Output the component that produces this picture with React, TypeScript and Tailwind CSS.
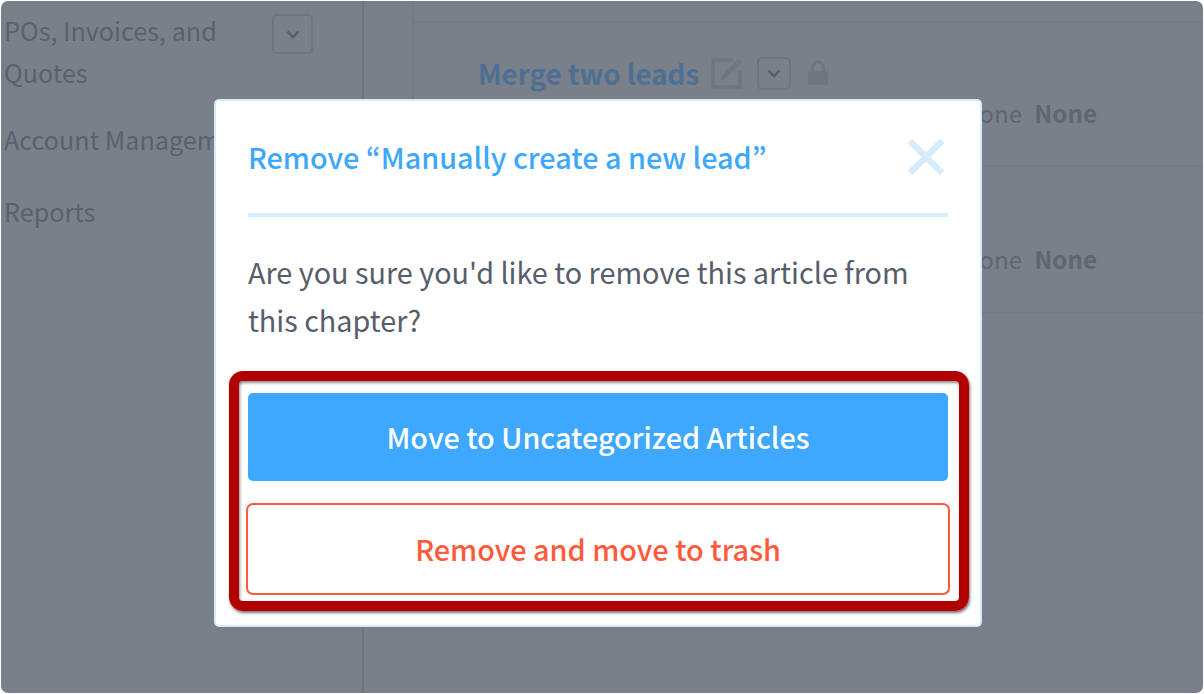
const FONT = '"Noto Sans CJK KR", "Noto Sans", sans-serif';

function ChevronButton({ className }: { className: string }) {
  return (
    <div className={"flex items-center justify-center rounded-[5px] border-2 border-[#6f7580] " + className}>
      <svg width="14" height="9" viewBox="0 0 14 9" fill="none" stroke="#565c68" strokeWidth="2.4">
        <path d="M1.5 1.5 7 7l5.5-5.5" />
      </svg>
    </div>
  );
}

function Sidebar() {
  return (
    <div className="w-[363px] shrink-0 border-r-2 border-[#6f7580] pl-[3px] text-[25.2px] text-[#5a606c]">
      <div className="flex h-[108px] items-start pt-[8px]">
        <div className="w-[268px] leading-[42px]">POs, Invoices, and Quotes</div>
        <ChevronButton className="mt-[5px] h-[40px] w-[41px]" />
      </div>
      <div className="mt-[9px] whitespace-nowrap leading-[42px]">Account Management</div>
      <div className="mt-[30px] whitespace-nowrap leading-[42px]">Reports</div>
    </div>
  );
}

function NoneCells() {
  return (
    <div className="absolute right-[106px] top-[calc(50%+19px)] flex -translate-y-1/2 gap-[12px] text-[24.2px] text-[#5f6571]">
      <span>None</span>
      <span className="font-semibold">None</span>
    </div>
  );
}

function Main() {
  return (
    <div className="flex-1 pl-[48px]">
      <div className="h-[313px] border-l-2 border-[#737a86] pt-[20px]">
        <div className="relative h-[146px] border-y-2 border-[#737a86] pl-[64px] pt-[29px]">
          <div className="flex items-center">
            <span className="text-[27.7px] font-semibold leading-[42px] text-[#4e6f93]">Merge two leads</span>
            <svg className="ml-[12px]" width="32" height="32" viewBox="0 0 32 32" fill="none">
              <path d="M22 3H2v27h27V13" stroke="#6f7682" strokeWidth="3.4" />
              <path d="M9 24l2-6L24 5l4 3-13 13z" fill="#6f7682" />
              <path d="M25 3.5l2-1.5 4 3.5-2 2z" fill="#6f7682" />
            </svg>
            <ChevronButton className="ml-[14px] h-[33px] w-[34px]" />
            <svg className="ml-[16px]" width="22" height="28" viewBox="0 0 24 28">
              <path d="M6 13V8a6 6 0 0 1 12 0v5" fill="none" stroke="#6f7480" strokeWidth="3.4" />
              <rect x="1" y="12" width="22" height="15" rx="3" fill="#6f7480" />
            </svg>
          </div>
          <NoneCells />
        </div>
        <div className="relative h-[147px] border-b-2 border-[#737a86]">
          <NoneCells />
        </div>
      </div>
    </div>
  );
}

function Modal() {
  return (
    <div className="relative h-[528px] w-[768px] rounded-[5px] border-2 border-[#d6ebfc] bg-white px-[32px]">
      <div className="flex h-[116px] items-center justify-between border-b-[4px] border-[#d6ebfc]">
        <h2 className="text-[28.8px] font-medium text-[#3ea8ff]">Remove “Manually create a new lead”</h2>
        <svg className="mr-[4px]" width="36" height="36" viewBox="0 0 36 36" stroke="#d6ebfc" strokeWidth="6.4">
          <path d="M2 2l32 32M34 2 2 34" />
        </svg>
      </div>
      <p className="mt-[31px] text-[28.8px] leading-[48px] text-[#565d6b]">
        Are you sure you'd like to remove this article from this chapter?
      </p>
      <button className="mt-[49px] block h-[88px] w-full rounded-[5px] bg-[#3ea8ff] text-[28.8px] font-medium text-white">
        Move to Uncategorized Articles
      </button>
      <button className="-mx-[2px] mt-[22px] block h-[92px] w-[704px] rounded-[7px] border-2 border-[#ff5a3c] bg-white text-[28.8px] font-medium text-[#ff5a3c]">
        Remove and move to trash
      </button>
      <div className="absolute left-[13px] top-[270px] h-[240px] w-[740px] rounded-[14px] border-[10px] border-[#b00000] shadow-[1px_2px_3px_rgba(0,0,0,0.55),inset_1px_2px_3px_rgba(0,0,0,0.45)]" />
    </div>
  );
}

export default function App() {
  return (
    <div className="h-[694px] w-[1204px] bg-white p-px" style={{ fontFamily: FONT }}>
      <div className="relative flex h-[692px] w-[1202px] overflow-hidden rounded-[7px] bg-[#79808a]">
        <Sidebar />
        <Main />
        <div className="absolute inset-0 flex justify-center pr-[8px] pt-[98px]">
          <Modal />
        </div>
      </div>
    </div>
  );
}
